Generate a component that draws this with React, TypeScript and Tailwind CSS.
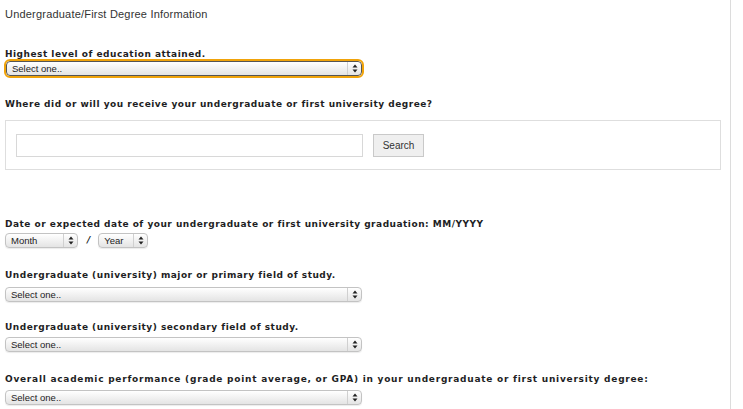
import React from 'react';

const labelCls =
  "font-['DejaVu_Sans',sans-serif] font-bold text-[9px] leading-[11px] text-[#1e1e24]";

function Arrows() {
  return (
    <svg width="6" height="9" viewBox="0 0 6 9" className="block">
      <path d="M3 0.5 L5.5 3.5 L0.5 3.5 Z" fill="#222" />
      <path d="M3 8.5 L5.5 5.5 L0.5 5.5 Z" fill="#222" />
    </svg>
  );
}

function FakeSelect({
  text,
  width,
  focused = false,
}: {
  text: string;
  width: string;
  focused?: boolean;
}) {
  return (
    <div
      className={`${width} h-[15px] flex items-stretch rounded-[4px] bg-gradient-to-b from-white to-[#e4e4e4] ${
        focused
          ? 'border border-[#555] outline outline-2 outline-[#f0a30a]'
          : 'border border-[#c3c3c3] shadow-[0_1px_1px_rgba(0,0,0,0.08)]'
      }`}
    >
      <span className="flex-1 pl-[5px] font-['Liberation_Sans',sans-serif] text-[9.5px] leading-[13px] text-[#222]">
        {text}
      </span>
      <span className="w-[14px] flex items-center justify-center border-l border-[#d0d0d0]">
        <Arrows />
      </span>
    </div>
  );
}

export default function App() {
  return (
    <div className="w-[743px] h-[409px] bg-white overflow-hidden">
      <div className="w-[731px] h-full border-r border-[#dcdcdc] pl-[5px]">
        <div className="pt-[8px] font-['Liberation_Sans',sans-serif] text-[11px] leading-[12px] tracking-[0.2px] text-[#333]">
          Undergraduate/First Degree Information
        </div>

        <div className={`${labelCls} tracking-[0.5px] mt-[29px]`}>Highest level of education attained.</div>
        <div className="mt-[1px] pl-[1px]">
          <FakeSelect text="Select one.." width="w-[356px]" focused />
        </div>

        <div className={`${labelCls} tracking-[0.5px] mt-[23px]`}>
          Where did or will you receive your undergraduate or first university degree?
        </div>

        <div className="mt-[10px] w-[716px] h-[50px] border border-[#dedede] flex items-center pl-[10px] gap-[10px]">
          <div className="w-[347px] h-[23px] border border-[#d8d8d8] bg-white" />
          <div className="w-[51px] h-[23px] border border-[#c9c9c9] bg-[#efefef] flex items-center justify-center font-['Liberation_Sans',sans-serif] text-[10px] text-[#333]">
            Search
          </div>
        </div>

        <div className={`${labelCls} tracking-[0.5px] mt-[49px]`}>
          Date or expected date of your undergraduate or first university graduation: MM/YYYY
        </div>
        <div className="mt-[3px] flex items-center">
          <FakeSelect text="Month" width="w-[73px]" />
          <span className="ml-[9px] mr-[8px] font-['DejaVu_Sans',sans-serif] font-bold italic text-[9px] text-[#222]">/</span>
          <FakeSelect text="Year" width="w-[50px]" />
        </div>

        <div className={`${labelCls} tracking-[0.5px] mt-[22px]`}>
          Undergraduate (university) major or primary field of study.
        </div>
        <div className="mt-[6px]">
          <FakeSelect text="Select one.." width="w-[357px]" />
        </div>

        <div className={`${labelCls} tracking-[0.5px] mt-[20px]`}>Undergraduate (university) secondary field of study.</div>
        <div className="mt-[4px]">
          <FakeSelect text="Select one.." width="w-[357px]" />
        </div>

        <div className={`${labelCls} tracking-[0.75px] mt-[22px]`}>
          Overall academic performance (grade point average, or GPA) in your undergraduate or first university degree:
        </div>
        <div className="mt-[5px]">
          <FakeSelect text="Select one.." width="w-[357px]" />
        </div>
      </div>
    </div>
  );
}
